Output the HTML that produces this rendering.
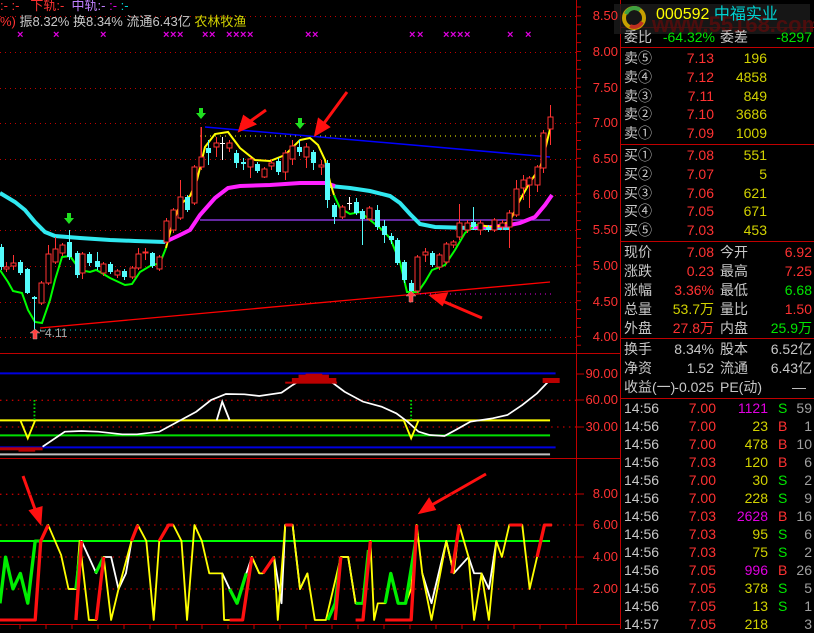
<!DOCTYPE html>
<html><head><meta charset="utf-8">
<style>
body{margin:0;background:#000;width:814px;height:629px;overflow:hidden;position:relative;font-family:"Liberation Sans","Noto Sans CJK SC",sans-serif}
svg{position:absolute;left:0;top:0}
.t{position:absolute;white-space:nowrap;font-size:14px;line-height:18px}
.w{color:#c8c8c8}.r{color:#ff3232}.y{color:#d2d200}.g{color:#00e600}.m{color:#e000e0}.c{color:#00d2d2}.gr{color:#a0a0a0}
.ax{position:absolute;font-size:13px;color:#ff3232;right:196px;width:40px;text-align:right;line-height:14px}
.x{position:absolute;top:30px;font-size:11px;line-height:11px;color:#e000e0;font-weight:bold}
</style></head><body>
<svg width="814" height="629" id="s" xmlns="http://www.w3.org/2000/svg">
<g stroke="#c00000" stroke-width="1" fill="none">
<line x1="576.5" y1="0" x2="576.5" y2="625"/>
<line x1="620.5" y1="0" x2="620.5" y2="629"/>
<line x1="0" y1="353.5" x2="620" y2="353.5"/>
<line x1="0" y1="458.5" x2="620" y2="458.5"/>
<line x1="0" y1="624.5" x2="620" y2="624.5"/>
<line x1="620" y1="27.5" x2="814" y2="27.5"/>
<line x1="620" y1="47.5" x2="814" y2="47.5"/>
<line x1="620" y1="144.5" x2="814" y2="144.5"/>
<line x1="620" y1="241.5" x2="814" y2="241.5"/>
<line x1="620" y1="338.5" x2="814" y2="338.5"/>
<line x1="620" y1="398.5" x2="814" y2="398.5"/>
</g>
<g stroke="#c00000" stroke-dasharray="1,4" id="grid"></g>
<g stroke="#c00000" id="ticks"></g>
<line x1="40" y1="328" x2="550" y2="282" stroke="#ff0000" stroke-width="1.3"/>
<line x1="40" y1="330" x2="555" y2="330" stroke="#00d2d2" stroke-dasharray="1,4"/>
<line x1="420" y1="294" x2="555" y2="294" stroke="#e000e0" stroke-dasharray="1,4"/>
<line x1="200" y1="136" x2="555" y2="136" stroke="#ffff00" stroke-dasharray="1,4"/>
<line x1="205" y1="127" x2="550" y2="157" stroke="#0000ff" stroke-width="1.5"/>
<line x1="200" y1="220" x2="550" y2="220" stroke="#a040ff" stroke-width="1.3"/>
<line x1="201" y1="127" x2="201" y2="157" stroke="#ff3232"/>
<polyline fill="none" stroke="#30e8f0" stroke-width="4" points="0,193 15,202 25,210 35,222 45,232 55,236 80,238 110,240 135,241 165,242"/>
<polyline fill="none" stroke="#30e8f0" stroke-width="4" points="330,186 350,188 370,191 390,196 400,203 410,214 420,224 435,227 470,228 510,228"/>
<polyline fill="none" stroke="#ff20ff" stroke-width="4" points="165,242 180,235 190,230 200,215 215,198 228,188 240,186 270,185 300,183 325,183 335,186"/>
<polyline fill="none" stroke="#ff20ff" stroke-width="4" points="470,227 490,227 510,225 520,223 535,217 545,205 552,195"/>
<polyline fill="none" stroke="#00ff00" stroke-width="2" points="0,270 8,282 13,291 22,293 28,310 35,322 42,323 50,300 55,280 62,257 70,256 80,270 90,272 96,270 100,272 110,278 125,285 132,284 140,272 150,266 160,263 166,248"/>
<polyline fill="none" stroke="#ffff00" stroke-width="2" points="166,248 172,225 180,205 190,196 197,180 205,147 215,134 228,132 240,148 255,160 270,161 285,155 300,140 310,138 318,145 325,160 330,182 334,195"/>
<polyline fill="none" stroke="#00ff00" stroke-width="2" points="334,195 340,208 350,214 360,212 370,220 380,228 390,238 400,262 407,292 418,292 425,282 432,270 445,265 455,250 465,233 475,225 480,225"/>
<polyline fill="none" stroke="#ffff00" stroke-width="2" points="480,225 490,227 500,226 510,221 520,200 530,182 540,168 545,150 551,125"/>
<g id="candles"></g>
<g fill="#20e020" id="garr"></g>
<path d="M35,329 l5,4 h-3 v6 h-4 v-6 h-3z" fill="#ff4040" stroke="#c0a0a0" stroke-width=".5"/>
<path d="M411,291 l5,5 h-3 v6 h-4 v-6 h-3z" fill="#ff4040" stroke="#c0a0a0" stroke-width=".5"/>
<line x1="40" y1="331" x2="45" y2="331" stroke="#aaa"/>
<text x="45" y="337" fill="#aaa" font-size="12" font-family="Liberation Sans">4.11</text>
<g stroke="#ff1010" stroke-width="3" fill="#ff1010">
<line x1="266" y1="110" x2="245" y2="125"/><path d="M240,130 l4,-13 l10,7z"/>
<line x1="347" y1="92" x2="322" y2="126"/><path d="M316,134 l3,-14 l9,7z"/>
<line x1="482" y1="318" x2="440" y2="300"/><path d="M432,296 l14,-2 l-4,10z"/>
<line x1="23" y1="476" x2="36" y2="512"/><path d="M40,522 l-9,-11 l10,-3z"/>
<line x1="486" y1="474" x2="430" y2="506"/><path d="M421,512 l8,-12 l5,9z"/>
</g>
<g transform="translate(0,350) scale(0.3704,0.3333)">
<line x1="0" y1="70" x2="1500" y2="70" stroke="#0000e0" stroke-width="6"/>
<line x1="0" y1="292" x2="1500" y2="292" stroke="#0000e0" stroke-width="6"/>
<line x1="0" y1="211" x2="1485" y2="211" stroke="#ffff00" stroke-width="6"/>
<line x1="0" y1="256" x2="1485" y2="256" stroke="#00e000" stroke-width="6"/>
<line x1="0" y1="313" x2="1485" y2="313" stroke="#c0c0c0" stroke-width="6"/>
<line x1="0" y1="151" x2="1560" y2="151" stroke="#c00000" stroke-width="4" stroke-dasharray="4,12"/>
<line x1="0" y1="231" x2="1560" y2="231" stroke="#c00000" stroke-width="4" stroke-dasharray="4,12"/>
<polyline fill="none" stroke="#fff" stroke-width="5" points="115,290 175,245 220,243 265,245 330,253 370,253 430,245 480,215 530,185 570,150 610,132 660,133 700,138 760,128 790,105 820,85 870,85 900,100 930,125 980,155 1030,170 1070,190 1100,215 1130,245 1160,255 1200,258 1230,240 1270,215 1330,205 1370,195 1410,165 1450,130 1480,95"/>
<polyline fill="none" stroke="#fff" stroke-width="5" points="585,211 600,155 620,211"/>
<polyline fill="none" stroke="#ffff00" stroke-width="5" points="55,211 75,265 95,211"/>
<polyline fill="none" stroke="#ffff00" stroke-width="5" points="1090,211 1110,265 1130,211"/>
<line x1="93" y1="150" x2="93" y2="211" stroke="#00e000" stroke-width="5" stroke-dasharray="5,6"/>
<line x1="1110" y1="150" x2="1110" y2="211" stroke="#00e000" stroke-width="5" stroke-dasharray="5,6"/>
<g fill="#bb0000"><rect x="0" y="292" width="115" height="9"/><rect x="50" y="296" width="45" height="9"/>
<rect x="770" y="95" width="140" height="6"/><rect x="788" y="84" width="120" height="14"/><rect x="806" y="74" width="82" height="12"/><rect x="825" y="71" width="45" height="6"/>
<rect x="1465" y="84" width="46" height="15"/></g>
</g>
<g transform="translate(0,455) scale(0.3704,0.3333)" fill="none" stroke-linejoin="round">
<line x1="0" y1="118" x2="1560" y2="118" stroke="#c00000" stroke-width="4" stroke-dasharray="4,12"/>
<line x1="0" y1="210" x2="1560" y2="210" stroke="#c00000" stroke-width="4" stroke-dasharray="4,12"/>
<line x1="0" y1="306" x2="1560" y2="306" stroke="#c00000" stroke-width="4" stroke-dasharray="4,12"/>
<line x1="0" y1="402" x2="1560" y2="402" stroke="#c00000" stroke-width="4" stroke-dasharray="4,12"/>
<line x1="0" y1="258" x2="1485" y2="258" stroke="#00ff00" stroke-width="6"/>
<polyline stroke="#fff" stroke-width="5" points="185,402 205,402 220,258 260,355 280,306 300,306 320,402 340,355 355,258"/><polyline stroke="#fff" stroke-width="5" points="565,355 600,355 620,402 640,445 665,355 680,306 700,355 710,355"/><polyline stroke="#fff" stroke-width="5" points="740,306 760,445 770,210 790,210 810,402 830,355"/><polyline stroke="#fff" stroke-width="5" points="920,306 940,306 960,445 980,445"/><polyline stroke="#fff" stroke-width="5" points="1140,355 1165,445 1205,258 1225,355 1265,306 1280,355 1300,355 1320,402 1340,258"/>
<polyline stroke="#ffff00" stroke-width="5" points="110,258 130,210 165,300 185,402 205,402 215,258 240,495 260,495 280,306 300,495 320,402 355,258 372,210 395,258 415,495 430,258 455,210 468,210 490,258 505,495 525,210 545,258 565,355 600,355 605,495 655,495 680,306 700,355 710,355 740,306 750,495 770,210 790,210 800,306 810,402 830,355 850,495 880,495 920,306 940,306 960,445 980,445 1000,258 1010,495 1020,445 1040,445 1055,355 1075,445 1095,445 1110,402 1125,210 1140,355 1165,495 1205,258 1225,355 1240,210 1265,306 1280,495 1300,355 1320,495 1340,258 1355,306 1375,210 1410,210 1430,402 1450,306 1470,210 1490,210"/>
<g stroke="#00ee00" stroke-width="9">
<polyline points="0,445 15,306 35,402 55,355 75,445 95,258 110,258"/><polyline points="205,402 220,258"/><polyline points="258,355 280,306"/><polyline points="620,402 640,445 665,355"/><polyline points="885,495 905,445 920,306"/><polyline points="960,445 980,445 995,285"/><polyline points="1040,445 1055,355 1075,445 1095,445 1125,240"/>
</g>
<g stroke="#ff1010" stroke-width="9">
<polyline points="0,495 95,495 110,258 130,210"/><polyline points="205,495 220,258"/><polyline points="260,495 280,306"/><polyline points="355,258 372,210"/><polyline points="430,258 455,210 468,210"/><polyline points="620,495 655,495 680,306"/><polyline points="710,355 740,306"/><polyline points="770,210 790,210"/><polyline points="905,495 920,306"/><polyline points="960,495 980,495 1000,258"/><polyline points="1040,495 1110,495 1125,210"/><polyline points="1220,355 1240,210"/><polyline points="1375,210 1410,210"/><polyline points="1450,306 1470,210 1490,210"/>
</g>
</g>
<rect x="614" y="4" width="196" height="30" fill="#1c1c1c" opacity=".8"/>
<circle cx="634" cy="18" r="10" fill="none" stroke="#c8a000" stroke-width="4"/>
<path d="M626,14 a9,9 0 0 1 14,-4" stroke="#40a040" stroke-width="4" fill="none"/>
<path d="M630,26 a9,9 0 0 0 12,-4" stroke="#c03020" stroke-width="4" fill="none"/>
<text x="652" y="32" fill="#5a0c0c" font-size="22" font-weight="bold" font-family="Liberation Sans" opacity=".8">www.55168.com</text>
</svg>

<div class="t r" style="left:0;top:-3px;font-size:13px">:- :- &nbsp;&nbsp;下轨:- &nbsp;<span style="color:#c080ff">中轨:-</span> <span class="m">:-</span> <span class="c">:-</span></div>
<div class="t w" style="left:0;top:13px;font-size:13px"><span class="r">%)</span> 振8.32% 换8.34% 流通6.43亿 <span class="y">农林牧渔</span></div>
<div id="xm"></div>

<div id="axes"></div>
<div id="rp"></div>
<div class="t" style="left:656px;top:5px;font-size:16px;line-height:20px"><span style="color:#ffff00">000592</span> <span class="c">中福实业</span></div>

<script>
var ns='http://www.w3.org/2000/svg';
function el(p,t,a){var e=document.createElementNS(ns,t);for(var k in a)e.setAttribute(k,a[k]);document.getElementById(p).appendChild(e);return e;}
var xm='';[20,56,103,166,173,180,205,212,229,236,243,250,308,315,412,420,446,453,460,467,510,528].forEach(function(x){xm+='<div class="x" style="left:'+(x-3)+'px">×</div>';});
document.getElementById('xm').innerHTML=xm;
[16,52,88,123,159,195,230,266,302,337].forEach(function(y){el('grid','line',{x1:0,y1:y+.5,x2:576,y2:y+.5});});
for(var y=7;y<350;y+=8.9)el('ticks','line',{x1:577,y1:y,x2:581,y2:y});
[374,400,427].forEach(function(y){el('ticks','line',{x1:577,y1:y,x2:584,y2:y});});
[494,525,557,589].forEach(function(y){el('ticks','line',{x1:577,y1:y,x2:584,y2:y});});
for(var x=20;x<576;x+=26)el('ticks','line',{x1:x,y1:624,x2:x,y2:629});
var C=[[1,247,267,244,270,'c'],[6,267,269,262,272,'r'],[13,263,266,255,270,'r'],[20,262,273,260,275,'c'],[27,269,293,268,294,'c'],[34,297,299,296,330,'c'],[41,283,303,281,305,'r'],[48,254,283,245,285,'r'],[55,249,262,237,264,'r'],[62,245,253,243,256,'r'],[69,242,257,230,260,'c'],[77,253,275,251,278,'c'],[82,254,273,252,279,'r'],[89,254,263,252,266,'c'],[97,261,267,252,270,'c'],[103,264,273,262,276,'r'],[110,264,272,262,274,'c'],[117,271,275,269,278,'r'],[124,271,277,269,280,'c'],[132,268,277,266,279,'r'],[138,254,268,248,270,'r'],[145,252,253,248,260,'r'],[152,253,266,252,268,'c'],[159,257,269,255,271,'r'],[166,221,242,218,244,'r'],[173,210,230,208,233,'r'],[180,197,218,180,220,'r'],[187,197,210,195,212,'c'],[194,167,203,165,205,'r'],[201,157,167,127,170,'r'],[208,148,153,140,165,'c'],[216,143,147,137,157,'r'],[222,143,144,137,160,'w'],[229,143,148,140,152,'r'],[236,153,163,150,168,'c'],[243,162,164,158,170,'c'],[250,159,167,157,178,'r'],[257,164,171,162,173,'c'],[264,169,177,167,178,'r'],[271,163,166,160,170,'r'],[278,161,172,158,175,'c'],[285,153,172,150,180,'r'],[292,146,159,140,165,'r'],[299,147,152,140,156,'c'],[306,147,157,143,168,'r'],[313,152,163,150,170,'c'],[321,165,167,160,175,'r'],[327,163,200,160,208,'c'],[334,205,217,203,224,'c'],[342,207,217,205,219,'r'],[349,203,204,197,210,'w'],[356,202,213,198,215,'c'],[362,211,219,209,245,'c'],[369,208,219,206,221,'r'],[377,210,227,205,230,'c'],[384,226,235,220,243,'c'],[391,236,240,233,244,'c'],[397,240,263,238,265,'c'],[404,262,280,260,283,'c'],[411,283,291,280,293,'c'],[417,257,291,255,293,'r'],[425,252,255,248,262,'r'],[432,253,265,251,267,'c'],[439,255,267,253,270,'r'],[446,244,262,242,264,'r'],[453,242,245,240,248,'r'],[459,223,237,204,240,'r'],[467,223,230,220,233,'r'],[473,222,227,207,230,'c'],[480,223,230,220,235,'r'],[488,227,230,225,232,'c'],[494,220,230,218,232,'r'],[502,223,227,220,230,'r'],[509,213,227,210,248,'r'],[516,189,215,180,217,'r'],[523,180,188,175,200,'r'],[529,178,185,176,208,'r'],[537,167,185,165,192,'r'],[543,133,168,130,173,'r'],[550,117,129,105,145,'r']];
C.forEach(function(c){var col=c[5]=='r'?'#ff3232':c[5]=='c'?'#54fcfc':'#ffffff';
el('candles','line',{x1:c[0]+.5,y1:c[3],x2:c[0]+.5,y2:c[4],stroke:col});
if(c[5]=='w'){el('candles','line',{x1:c[0]-2,y1:c[1]+.5,x2:c[0]+3,y2:c[1]+.5,stroke:col});return;}
el('candles','rect',{x:c[0]-2,y:c[1],width:5,height:Math.max(1,c[2]-c[1]),fill:c[5]=='r'?'#000':col,stroke:c[5]=='r'?col:'none'});});
[[69,213],[201,108],[300,118]].forEach(function(a){el('garr','path',{d:'M'+(a[0]-2)+','+a[1]+' h4 v5 h3 l-5,6 l-5,-6 h3z'});});
var A=[[8.50,16],[8.00,52],[7.50,88],[7.00,123],[6.50,159],[6.00,195],[5.50,230],[5.00,266],[4.50,302],[4.00,337],[90.00,374],[60.00,400],[30.00,427],[8.00,494],[6.00,525],[4.00,557],[2.00,589]];
var h='';A.forEach(function(a){h+='<div class="ax" style="top:'+(a[1]-7)+'px">'+a[0].toFixed(2)+'</div>';});
document.getElementById('axes').innerHTML=h;
function row(y,cells){var o='';cells.forEach(function(c){o+='<div class="t '+c[1]+'" style="'+(c[3]?'right:'+(814-c[0])+'px':'left:'+c[0]+'px')+';top:'+(y-9)+'px">'+c[2]+'</div>';});return o;}
var R='';
R+=row(37,[[624,'w','委比'],[715,'g','-64.32%',1],[720,'w','委差'],[812,'g','-8297',1]]);
var sell=[['卖⑤','7.13','196'],['卖④','7.12','4858'],['卖③','7.11','849'],['卖②','7.10','3686'],['卖①','7.09','1009']];
sell.forEach(function(r,i){R+=row(58+i*18.8,[[624,'w',r[0]],[714,'r',r[1],1],[767,'y',r[2],1]]);});
var buy=[['买①','7.08','551'],['买②','7.07','5'],['买③','7.06','621'],['买④','7.05','671'],['买⑤','7.03','453']];
buy.forEach(function(r,i){R+=row(155+i*18.8,[[624,'w',r[0]],[714,'r',r[1],1],[767,'y',r[2],1]]);});
var q=[['现价','r','7.08','今开','r','6.92'],['涨跌','r','0.23','最高','r','7.25'],['涨幅','r','3.36%','最低','g','6.68'],['总量','y','53.7万','量比','r','1.50'],['外盘','r','27.8万','内盘','g','25.9万']];
q.forEach(function(r,i){R+=row(252+i*19,[[624,'w',r[0]],[714,r[1],r[2],1],[720,'w',r[3]],[812,r[4],r[5],1]]);});
R+=row(349,[[624,'w','换手'],[714,'w','8.34%',1],[720,'w','股本'],[812,'w','6.52亿',1]]);
R+=row(368,[[624,'w','净资'],[714,'w','1.52',1],[720,'w','流通'],[812,'w','6.43亿',1]]);
R+=row(387,[[624,'w','收益(一)'],[714,'w','-0.025',1],[720,'w','PE(动)'],[806,'w','—',1]]);
var T=[['14:56','7.00','1121','m','S','59'],['14:56','7.00','23','y','B','1'],['14:56','7.00','478','y','B','10'],['14:56','7.03','120','y','B','6'],['14:56','7.00','30','y','S','2'],['14:56','7.00','228','y','S','9'],['14:56','7.03','2628','m','B','16'],['14:56','7.03','95','y','S','6'],['14:56','7.03','75','y','S','2'],['14:56','7.05','996','m','B','26'],['14:56','7.05','378','y','S','5'],['14:56','7.05','13','y','S','1'],['14:57','7.05','218','y','','3']];
T.forEach(function(r,i){R+=row(408+i*18,[[624,'w',r[0]],[716,'r',r[1],1],[768,r[3],r[2],1],[778,r[4]=='S'?'g':'r',r[4]],[812,'gr',r[5],1]]);});
document.getElementById('rp').innerHTML=R;
</script>
</body></html>
